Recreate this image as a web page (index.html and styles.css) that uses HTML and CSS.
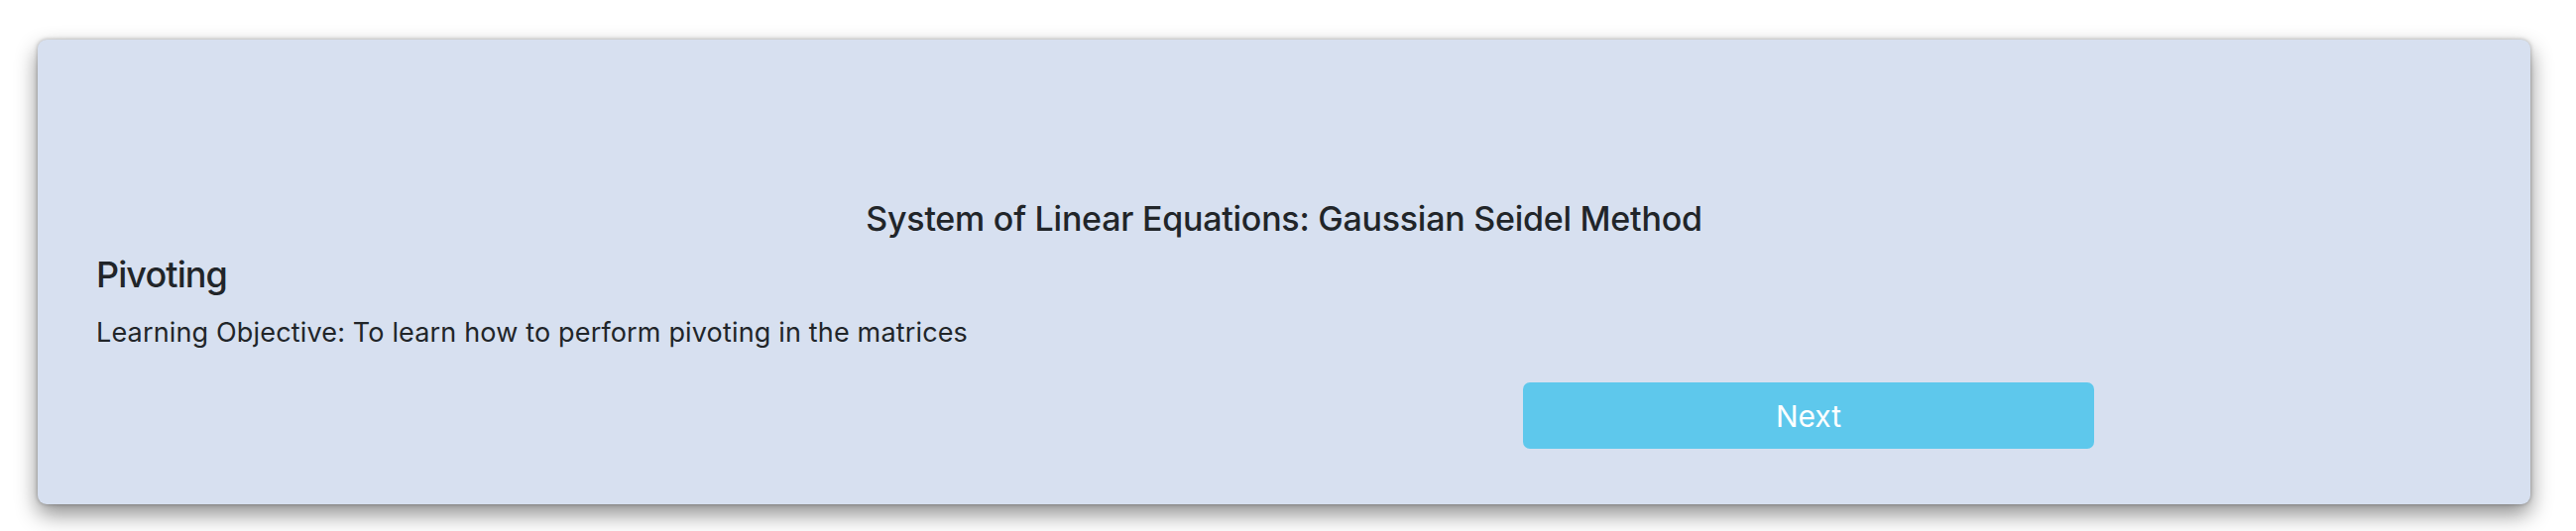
FILE: index.html
```html
<!DOCTYPE html>
<html lang="en">
<head>
<meta charset="utf-8">
<title>Gaussian Seidel Method</title>
<link rel="stylesheet" href="styles.css">
</head>
<body>
<main class="card">
  <h1 class="title">System of Linear Equations: Gaussian Seidel Method</h1>
  <h2 class="subtitle">Pivoting</h2>
  <p class="objective">Learning Objective: To learn how to perform pivoting in the matrices</p>
  <div class="actions">
    <button class="btn-next" type="button">Next</button>
  </div>
</main>
</body>
</html>
```

FILE: styles.css
```css
html, body {
  margin: 0;
  background: #ffffff;
}
body {
  padding: 40px 46px 27px 38px;
  font-family: Inter, "Noto Sans", "Liberation Sans", sans-serif;
  color: #212529;
}
.card {
  box-sizing: border-box;
  height: 469px;
  background: #d7e0f0;
  border-radius: 9px;
  padding: 160px 59px 0 59px;
  box-shadow: 0 10px 22px rgba(0, 0, 0, 0.45), 0 0 4px rgba(0, 0, 0, 0.3);
  display: flex;
  flex-direction: column;
}
.title {
  margin: 0;
  font-size: 34px;
  line-height: 41px;
  font-weight: 500;
  letter-spacing: -0.25px;
  text-align: center;
}
.subtitle {
  margin: 15px 0 0;
  font-size: 36px;
  line-height: 43px;
  font-weight: 500;
  letter-spacing: -0.9px;
}
.objective {
  margin: 21px 0 0;
  font-size: 27px;
  line-height: 32px;
  font-weight: 400;
  letter-spacing: 0.16px;
}
.actions {
  margin-top: 34px;
  padding-left: 1439px;
  display: flex;
}
.btn-next {
  width: 576px;
  height: 67px;
  border: none;
  border-radius: 7px;
  background: #5ec8ec;
  color: #ffffff;
  font-family: inherit;
  font-size: 30px;
  font-weight: 400;
  padding: 0;
}
```
